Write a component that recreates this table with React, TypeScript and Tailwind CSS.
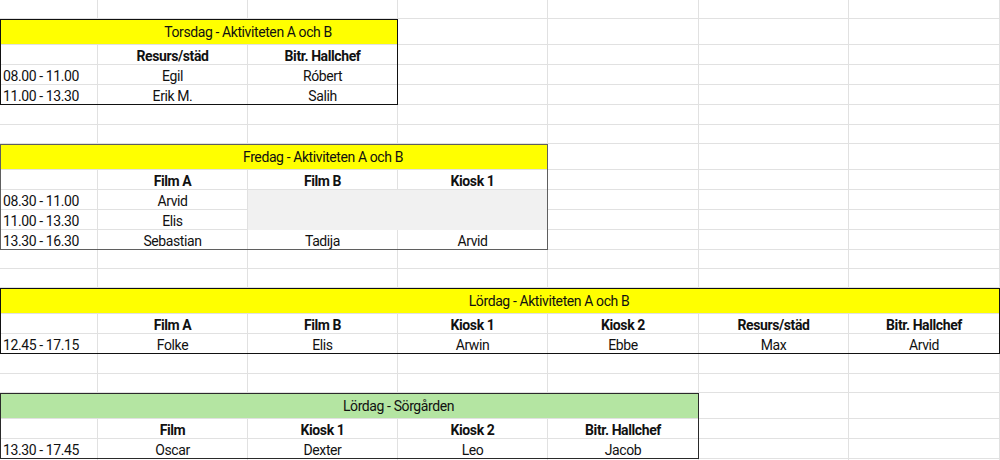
import React from 'react'

// column widths of the sheet (A is the time column)
const COLS = [98, 150, 150, 150, 151, 150, 151]

type Cell = string | null // null = shaded empty cell

interface Schedule {
  title: string
  titleBg: string
  border: string
  header: string[]
  rows: { time: string; cells: Cell[] }[]
}

const schedules: Schedule[] = [
  {
    title: 'Torsdag - Aktiviteten A och B',
    titleBg: 'bg-[#ffff00]',
    border: 'outline-[#111]',
    header: ['Resurs/städ', 'Bitr. Hallchef'],
    rows: [
      { time: '08.00 - 11.00', cells: ['Egil', 'Róbert'] },
      { time: '11.00 - 13.30', cells: ['Erik M.', 'Salih'] },
    ],
  },
  {
    title: 'Fredag - Aktiviteten A och B',
    titleBg: 'bg-[#ffff00]',
    border: 'outline-[#5f5f5f]',
    header: ['Film A', 'Film B', 'Kiosk 1'],
    rows: [
      { time: '08.30 - 11.00', cells: ['Arvid', null, null] },
      { time: '11.00 - 13.30', cells: ['Elis', null, null] },
      { time: '13.30 - 16.30', cells: ['Sebastian', 'Tadija', 'Arvid'] },
    ],
  },
  {
    title: 'Lördag - Aktiviteten A och B',
    titleBg: 'bg-[#ffff00]',
    border: 'outline-[#111]',
    header: ['Film A', 'Film B', 'Kiosk 1', 'Kiosk 2', 'Resurs/städ', 'Bitr. Hallchef'],
    rows: [{ time: '12.45 - 17.15', cells: ['Folke', 'Elis', 'Arwin', 'Ebbe', 'Max', 'Arvid'] }],
  },
  {
    title: 'Lördag - Sörgården',
    titleBg: 'bg-[#b4e5a2]',
    border: 'outline-[#2a2a2a]',
    header: ['Film', 'Kiosk 1', 'Kiosk 2', 'Bitr. Hallchef'],
    rows: [{ time: '13.30 - 17.45', cells: ['Oscar', 'Dexter', 'Leo', 'Jacob'] }],
  },
]

// blank rows between the schedules
const gaps = [[19], [20, 19], [19, 19], [20, 19]]

function BlankRow({ from = 0, h }: { from?: number; h: number }) {
  return (
    <div className="flex shrink-0" style={{ height: h }}>
      {COLS.slice(from).map((w, i) => (
        <div key={i} className="shrink-0 border-r border-b border-[#e1e1e1]" style={{ width: w }} />
      ))}
    </div>
  )
}

function ScheduleTable({ s }: { s: Schedule }) {
  const n = s.header.length + 1
  const width = COLS.slice(0, n).reduce((a, b) => a + b, 0)
  const rows = [['', ...s.header] as Cell[], ...s.rows.map((r) => [r.time, ...r.cells])]

  return (
    <div className="flex shrink-0">
      <div className={`flex shrink-0 flex-col outline outline-1 -outline-offset-1 ${s.border}`} style={{ width }}>
        <div className={`flex h-[26px] items-center border-b border-[#e1e1e1] ${s.titleBg}`}>
          <div className="w-[98px] shrink-0" />
          <div className="flex-1 pt-[1px] text-center">{s.title}</div>
        </div>
        {rows.map((cells, r) => (
          <div key={r} className="flex h-[20px]">
            {cells.map((c, i) => {
              const shaded = c === null
              return (
                <div
                  key={i}
                  className={`flex shrink-0 items-center border-r border-b pt-[2px] ${
                    shaded ? 'border-[#f1f1f1] bg-[#f1f1f1]' : 'border-[#e1e1e1]'
                  } ${i === 0 ? 'justify-start pl-[3px]' : 'justify-center'} ${r === 0 ? 'font-bold' : ''}`}
                  style={{ width: COLS[i] }}
                >
                  {c}
                </div>
              )
            })}
          </div>
        ))}
      </div>
      <div className="flex flex-col">
        <BlankRow from={n} h={26} />
        {rows.map((_, r) => (
          <BlankRow key={r} from={n} h={20} />
        ))}
      </div>
    </div>
  )
}

export default function App() {
  return (
    <div
      className="flex h-[460px] w-[1000px] flex-col overflow-hidden bg-white text-[14px] leading-none tracking-[-0.4px] text-[#111]"
      style={{ fontFamily: 'Roboto, sans-serif' }}
    >
      {schedules.map((s, i) => (
        <React.Fragment key={i}>
          {gaps[i].map((h, j) => (
            <BlankRow key={j} h={h} />
          ))}
          <ScheduleTable s={s} />
        </React.Fragment>
      ))}
      <BlankRow h={20} />
    </div>
  )
}
